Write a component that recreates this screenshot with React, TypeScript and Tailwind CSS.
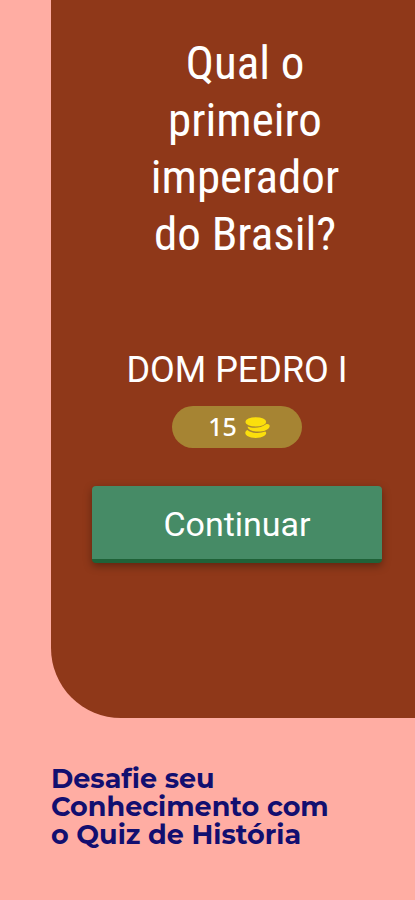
const QUESTION = 'Qual o primeiro imperador do Brasil?';
const ANSWER = 'DOM PEDRO I';
const REWARD = 15;

function CoinStack({ className }: { className?: string }) {
  return (
    <svg viewBox="0 0 25 21" className={className} fill="#fbdf0c" aria-hidden="true">
      <ellipse cx="10.8" cy="4.9" rx="10.4" ry="4.7" />
      <path d="M2.6 9.4C7 11.3 15.8 11.4 21 7.2C23.2 6.8 25 7.7 24.6 9.5C23.8 13.1 18 14.8 12.7 14.6C7.4 14.4 2.8 12.5 2.6 9.4Z" />
      <path d="M2.4 12.9C6 16.1 14 17 20.4 14.6C21.8 15.6 21.4 17.5 19 19C15 21.6 6.4 21.6 2.4 19C-.4 17.3 -.4 14.1 2.4 12.9Z" />
    </svg>
  );
}

export default function App() {
  return (
    <div className="min-h-screen bg-[#ffada3] pb-12 pl-[51px]">
      <main className="flex flex-col items-center rounded-bl-[70px] bg-[#8f3819] pt-[34px] pr-[33px] pb-[155px] pl-[41px] font-['Roboto',sans-serif] text-white">
        <h1 className="max-w-60 pl-4 text-center font-['Roboto_Condensed','Roboto',sans-serif] text-[47px] leading-[57px]">
          {QUESTION}
        </h1>

        <p className="mt-[84px] text-[36px] leading-[48px]">{ANSWER}</p>

        <div className="mt-3 flex h-[42px] items-center gap-2 rounded-full bg-[#a68433] pr-8 pl-9 font-['Noto_Sans',sans-serif] text-[25px] font-medium">
          <span>{REWARD}</span>
          <CoinStack className="h-[21px] w-[25px]" />
        </div>

        <button
          type="button"
          className="mt-[38px] h-[77px] w-full rounded border-b-4 border-[#1f6238] bg-[#468b66] pt-1 text-[34px] shadow-[0_3px_8px_rgba(0,0,0,0.35)]"
        >
          Continuar
        </button>
      </main>

      <h2 className="mt-[47px] max-w-[300px] font-['Montserrat','Inter',sans-serif] text-[27px] leading-7 font-bold text-[#120f70]">
        Desafie seu Conhecimento com o Quiz de História
      </h2>
    </div>
  );
}
